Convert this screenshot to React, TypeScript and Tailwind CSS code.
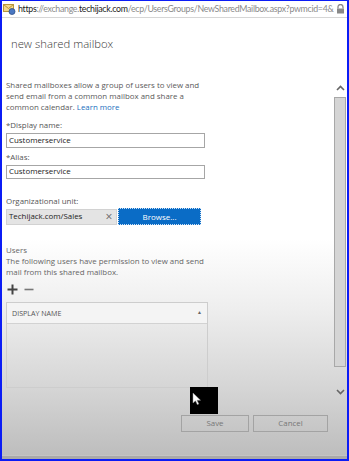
import React from 'react';

const Chevron: React.FC<{ up?: boolean }> = ({ up }) => (
  <svg width="9" height="6" viewBox="0 0 9 6" className="block">
    <path
      d={up ? 'M1 5 L4.5 1.5 L8 5' : 'M1 1 L4.5 4.5 L8 1'}
      fill="none"
      stroke="#666"
      strokeWidth="1.6"
    />
  </svg>
);

const App: React.FC = () => {
  return (
    <div className="relative w-[349px] h-[461px] overflow-hidden flex flex-col border-x-2 border-b-2 border-t border-[#0b1cf5] bg-white font-['Segoe_UI','Open_Sans',sans-serif]">
      {/* Address bar */}
      <div className="h-[17px] shrink-0 flex items-center border-b border-[#d6d6d6] bg-white pl-[1px] pr-[2px]">
        <svg width="13" height="12" viewBox="0 0 13 12" className="shrink-0">
          <rect x="0.5" y="1.5" width="10" height="7" fill="#f3d98a" stroke="#b8963a" />
          <path d="M0.5 1.5 L5.5 5.5 L10.5 1.5" fill="none" stroke="#b8963a" />
          <circle cx="9" cy="8.5" r="3" fill="#4a78c2" stroke="#2d4f8a" strokeWidth="0.8" />
        </svg>
        <div className="ml-[2px] flex-1 whitespace-nowrap overflow-hidden font-['Lato',sans-serif] text-[8.8px] leading-[12px] tracking-[-0.3px] text-[#8a8a8a]">
          <span className="text-[#222]">https</span>://exchange.<span className="text-[#222]">techijack.com</span>/ecp/UsersGroups/NewSharedMailbox.aspx?pwmcid=4&amp;
        </div>
        <svg width="9" height="10" viewBox="0 0 9 10" className="shrink-0 ml-[2px]">
          <path d="M2 4.5 V3 a2.5 2.5 0 0 1 5 0 V4.5" fill="none" stroke="#888" strokeWidth="1.3" />
          <rect x="1" y="4.5" width="7" height="5" fill="#888" />
        </svg>
      </div>

      {/* Page */}
      <div className="flex-1 flex flex-col bg-[linear-gradient(to_bottom,#ffffff_0%,#ffffff_50%,#eeeeee_66%,#d5d5d5_84%,#bcbcbc_100%)]">
        <div className="flex-1 flex">
          {/* Content */}
          <div className="flex-1 flex flex-col pl-[4px]">
            <h1 className="mt-[16px] pl-[5px] text-[11.3px] leading-[20px] font-light text-[#3a3a3a]">new shared mailbox</h1>

            <p className="mt-[26px] text-[7.9px] leading-[11px] text-[#5a5a5a]">
              Shared mailboxes allow a group of users to view and
              <br />
              send email from a common mailbox and share a
              <br />
              common calendar. <span className="text-[#1a6fc0]">Learn more</span>
            </p>

            <div className="mt-[6px] text-[7.9px] leading-[12px] text-[#555]">*Display name:</div>
            <div className="mt-[2px] w-[199px] h-[15px] border border-[#a6a6a6] bg-white flex items-center px-[2px] text-[7.9px] text-[#222]">
              Customerservice
            </div>

            <div className="mt-[3px] text-[7.9px] leading-[12px] text-[#555]">*Alias:</div>
            <div className="mt-[2px] w-[199px] h-[14px] border border-[#a6a6a6] bg-white flex items-center px-[2px] text-[7.9px] text-[#222]">
              Customerservice
            </div>

            <div className="mt-[16px] text-[7.9px] leading-[12px] text-[#555]">Organizational unit:</div>
            <div className="mt-[1px] flex items-center h-[17px]">
              <div className="w-[111px] h-[16px] bg-[#e4e4e4] border border-[#d2d2d2] flex items-center pl-[2px] text-[7.9px] text-[#222]">
                <span className="flex-1">Techijack.com/Sales</span>
                <span className="w-[14px] text-center text-[12px] leading-none text-[#666]">×</span>
              </div>
              <div className="ml-[1px] w-[83px] h-[17px] bg-[#0a6cc6] border border-dotted border-[#cfe3f7] flex items-center justify-center text-[8px] text-white">
                Browse...
              </div>
            </div>

            <div className="mt-[19px] text-[7.9px] leading-[12px] text-[#666]">Users</div>
            <p className="text-[7.9px] leading-[11px] text-[#666]">
              The following users have permission to view and send
              <br />
              mail from this shared mailbox.
            </p>

            <div className="mt-[5px] h-[12px] flex items-center gap-[6px] pl-[1px]">
              <svg width="11" height="11" viewBox="0 0 11 11">
                <path d="M5.5 0.5 V10.5 M0.5 5.5 H10.5" stroke="#444" strokeWidth="2" />
              </svg>
              <svg width="10" height="11" viewBox="0 0 10 11">
                <path d="M0.5 5.5 H9.5" stroke="#777" strokeWidth="1.6" />
              </svg>
            </div>

            <div className="mt-[7px] w-[202px] h-[86px] border border-[#cdcdcd] flex flex-col">
              <div className="h-[21px] flex items-center justify-between border-b border-[#d2d2d2] bg-[#f4f4f4] pl-[5px] pr-[5px]">
                <span className="text-[7.1px] text-[#555] uppercase">Display name</span>
                <span className="text-[5px] text-[#666]">▲</span>
              </div>
              <div className="flex-1"></div>
            </div>

            <div className="mt-[27px] flex gap-[4px] pl-[175px]">
              <div className="w-[68px] h-[17px] border border-[#a3a3a3] flex items-center justify-center text-[7.9px] text-[#777]">
                Save
              </div>
              <div className="w-[75px] h-[17px] border border-[#a3a3a3] flex items-center justify-center text-[7.9px] text-[#777]">
                Cancel
              </div>
            </div>
          </div>

          {/* Scrollbar */}
          <div className="w-[12px] mr-[1px] flex flex-col items-center pt-[67px]">
            <Chevron up />
            <div className="mt-[6px] w-[12px] h-[270px] bg-[#d5d5d5] border border-[#a8a8a8]"></div>
            <div className="mt-[22px]">
              <Chevron />
            </div>
          </div>
        </div>
        <div className="h-[4px] shrink-0 bg-[#a9a9a9] border-t border-[#c4c4c4]"></div>
      </div>

      {/* Cursor overlay */}
      <div className="absolute left-[188px] top-[386px] w-[28px] h-[27px] bg-black">
        <svg width="10" height="14" viewBox="0 0 10 14" className="absolute left-[2px] top-[5px]">
          <path d="M1 1 V11 L3.5 8.8 L5.3 12.6 L6.8 11.9 L5 8.2 H8.5 Z" fill="white" stroke="#999" strokeWidth="0.5" />
        </svg>
      </div>
    </div>
  );
};

export default App;
